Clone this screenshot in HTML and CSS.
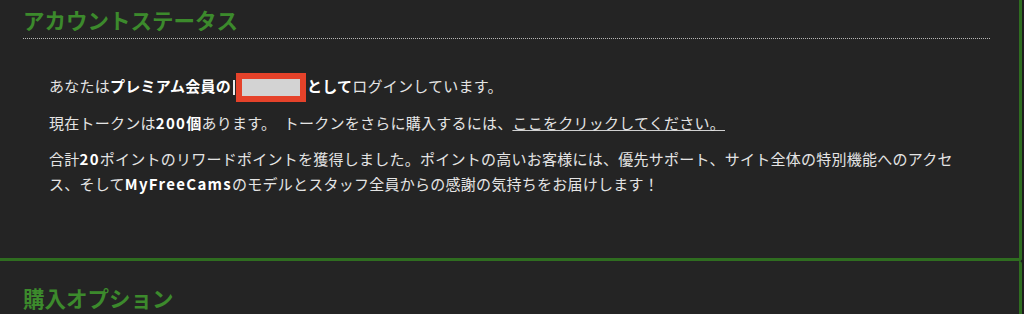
FILE: index.html
```html
<!DOCTYPE html>
<html lang="ja">
<head>
<meta charset="utf-8">
<title>アカウントステータス</title>
<link rel="stylesheet" href="styles.css">
</head>
<body>
<div class="page">
  <section class="panel panel-status">
    <h2 class="panel-title">アカウントステータス</h2>
    <div class="panel-body">
      <p class="line line-first">あなたは<b>プレミアム会員の<span class="stub"></span><span class="redact"></span>として</b>ログインしています。</p>
      <p class="line">現在トークンは<b><span class="latin">200</span>個</b>あります。<span class="gap"> </span>トークンをさらに購入するには、<a class="link" href="#">ここをクリックしてください。</a></p>
      <p class="line">合計<b class="latin">20</b>ポイントのリワードポイントを獲得しました。ポイントの高いお客様には、優先サポート、サイト全体の特別機能へのアクセス、そして<b class="latin">MyFreeCams</b>のモデルとスタッフ全員からの感謝の気持ちをお届けします！</p>
    </div>
  </section>
  <section class="panel panel-purchase">
    <h2 class="panel-title plain">購入オプション</h2>
  </section>
</div>
</body>
</html>
```

FILE: styles.css
```css
html, body {
  margin: 0;
  padding: 0;
  background: #1e1e1e;
  overflow: hidden;
}

body {
  font-family: "Noto Sans CJK JP", "Noto Sans", sans-serif;
  color: #e4e4e4;
}

.page {
  width: 1022px;
}

.panel {
  background: #242424;
  border-right: 3px solid #2f6d20;
}

.panel-status {
  height: 258px;
  border-bottom: 3px solid #2f6d20;
  border-bottom-right-radius: 3px;
}

.panel-purchase {
  height: 60px;
  border-top-right-radius: 3px;
}

.panel-title {
  margin: 0 29px 0 23px;
  padding: 4px 0 3px 0;
  font-size: 21.5px;
  line-height: 31px;
  font-weight: bold;
  color: #3c8a2c;
  border-bottom: 1px dotted #b8b8b8;
}

.panel-title.plain {
  border-bottom: none;
  padding-top: 21px;
}

.panel-body {
  padding: 34px 66px 0 49px;
}

.line {
  margin: 0 0 11px 0;
  font-size: 15px;
  letter-spacing: 0.25px;
  line-height: 25px;
}

.line b {
  font-weight: bold;
  color: #ffffff;
}

.line .latin {
  letter-spacing: 1.3px;
}

.line .gap {
  letter-spacing: 4px;
}

.line-first {
  margin-bottom: 8px;
}

.stub {
  display: inline-block;
  vertical-align: middle;
  width: 2px;
  height: 15px;
  margin: 0 1px 0 2px;
  background: #ececec;
}

.redact {
  display: inline-block;
  vertical-align: middle;
  box-sizing: border-box;
  width: 70px;
  height: 29px;
  border: 6px solid #e5422a;
  background: #d3d3d3;
  margin: 0 1px 0 0;
}

.link {
  color: #e4e4e4;
  text-decoration: underline;
  text-decoration-color: #d0d0d0;
}
```
